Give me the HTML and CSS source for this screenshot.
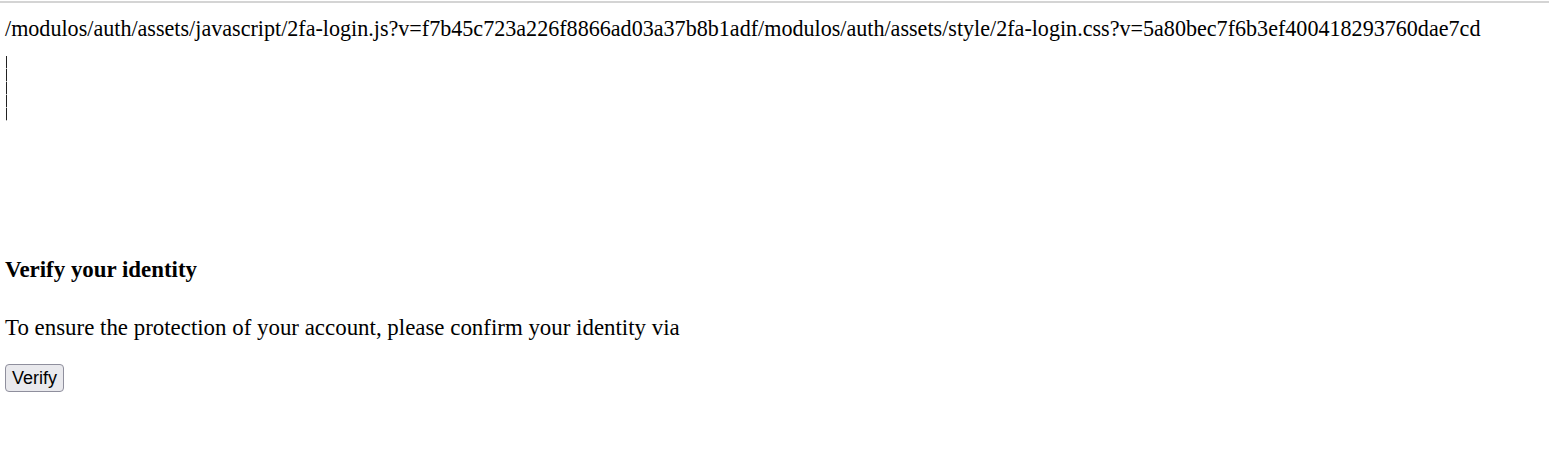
FILE: index.html
```html
<!DOCTYPE html>
<html>
<head>
<meta charset="utf-8">
<link rel="stylesheet" href="styles.css">
</head>
<body>
<div class="topline"></div>
<div class="page">
  <p class="paths">/modulos/auth/assets/javascript/2fa-login.js?v=f7b45c723a226f8866ad03a37b8b1adf/modulos/auth/assets/style/2fa-login.css?v=5a80bec7f6b3ef400418293760dae7cd</p>
  <div class="bars">
    <span class="bar"></span>
    <span class="bar"></span>
    <span class="bar"></span>
    <span class="bar"></span>
    <span class="bar"></span>
  </div>
  <h3 class="title">Verify your identity</h3>
  <p class="desc">To ensure the protection of your account, please confirm your identity via</p>
  <button class="btn" type="button">Verify</button>
</div>
</body>
</html>
```

FILE: styles.css
```css
html, body {
  margin: 0;
  padding: 0;
  background: #fff;
}
body {
  font-family: "Liberation Serif", "Times New Roman", serif;
  color: #000;
}
.topline {
  height: 2px;
  background: #d4d4d4;
  margin-top: 1px;
}
.page {
  padding: 0 5px;
}
.paths {
  margin: 14px 0 0 0;
  font-size: 22.1px;
  line-height: 24px;
}
.bars {
  display: flex;
  flex-direction: column;
  gap: 0;
  margin-top: 15px;
  padding-left: 1px;
}
.bar {
  display: block;
  width: 1px;
  height: 12px;
  background: #222;
  border-bottom: 1px solid #bbb;
}
.title {
  margin: 137px 0 0 0;
  font-size: 22.9px;
  line-height: 24px;
  font-weight: bold;
}
.desc {
  margin: 34px 0 0 0;
  font-size: 22.9px;
  line-height: 24px;
}
.btn {
  display: block;
  margin-top: 24px;
  font-family: "Liberation Sans", Arial, sans-serif;
  font-size: 18px;
  padding: 0 6px;
  height: 28px;
  border: 1px solid #8f8f9d;
  border-radius: 4px;
  background: #e9e9ed;
  color: #000;
}
```
